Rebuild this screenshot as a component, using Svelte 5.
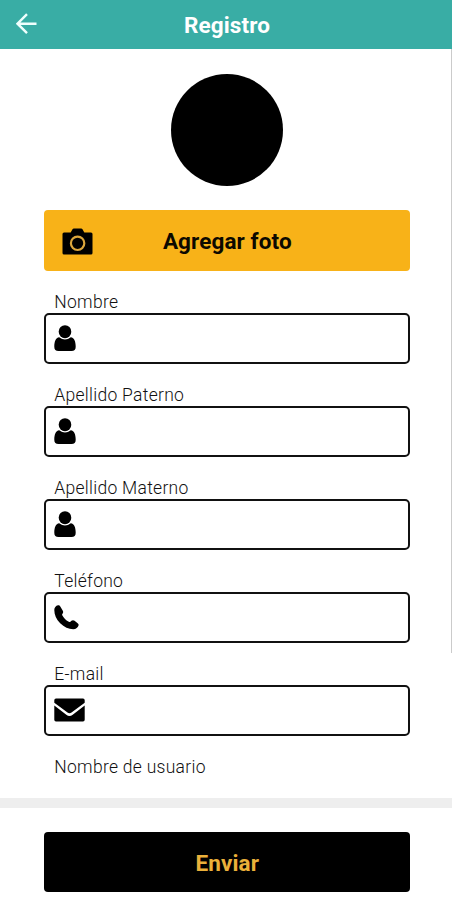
<script>
  const fields = [
    { id: "nombre", label: "Nombre", icon: "user", type: "text" },
    { id: "paterno", label: "Apellido Paterno", icon: "user", type: "text" },
    { id: "materno", label: "Apellido Materno", icon: "user", type: "text" },
    { id: "telefono", label: "Teléfono", icon: "phone", type: "tel" },
    { id: "email", label: "E-mail", icon: "mail", type: "email" },
  ];

  let values = $state({});
</script>

<div class="screen">
  <header>
    <button class="back" aria-label="Volver">
      <svg width="22" height="22" viewBox="0 0 22 22">
        <path d="M11 1.2 1.5 10.7 11 20.2M1.7 10.7H20.5" />
      </svg>
    </button>
    <h1>Registro</h1>
  </header>

  <main>
    <div class="avatar"></div>

    <button class="add-photo">
      <svg class="camera" width="31" height="27" viewBox="0 0 31 27">
        <path
          d="M2 4.5h6.7L10.5 1.2Q11 .5 11.8 .5h7.4q.8 0 1.3.7l1.8 3.3H29q1.5 0 1.5 1.5v19q0 1.5-1.5 1.5H2Q.5 26.5.5 25V6Q.5 4.5 2 4.5Z"
        />
        <circle cx="15.6" cy="15.3" r="6.7" />
      </svg>
      <span>Agregar foto</span>
    </button>

    {#each fields as field (field.id)}
      <div class="field">
        <label for={field.id}>{field.label}</label>
        <div class="box">
          {#if field.icon === "user"}
            <svg width="22" height="26" viewBox="0 0 22 26">
              <ellipse cx="11" cy="6.7" rx="6.3" ry="6.5" />
              <path
                d="M5.2 12.2Q11 16.8 16.8 12.2C20.3 12.7 21.7 16.5 21.7 21.7Q21.7 26 17.5 26H4.5Q.3 26 .3 21.7C.3 16.5 1.7 12.7 5.2 12.2Z"
              />
            </svg>
          {:else if field.icon === "phone"}
            <svg width="25" height="25" viewBox="0 0 25 25">
              <path
                d="M4 .3C1.8.8.3 2.600.3 5c0 4.500 2 9.500 5.900 13.300s8.500 6 13 6c2.800 0 4.900-1.700 5.400-4 .2-.9-.2-1.500-1-2.100l-3-2.400c-1-.8-2.200-.8-3.200 0l-1 .9c-.7.6-1.400.4-2.100-.1-2.200-1.400-4.600-3.900-5.900-6.200-.4-.7-.4-1.200.1-1.700.8-.9.9-1.900.3-3L6.300 1.600C5.700.5 5 .1 4 .3Z"
              />
            </svg>
          {:else}
            <svg width="31" height="24" viewBox="0 0 31 24">
              <path d="M2 .5h27q1.700 0 1.700 1.700v2.600L17.500 14.600q-2 1.500-4 0L.3 4.800V2.200Q.3.500 2 .5Z" />
              <path
                d="M.3 7.500 12.300 16.800q3.200 2.400 6.400 0L30.700 7.500v14.300q0 1.700-1.700 1.700H2Q.3 23.500.3 21.800Z"
              />
            </svg>
          {/if}
          <input id={field.id} type={field.type} bind:value={values[field.id]} />
        </div>
      </div>
    {/each}

    <div class="field">
      <label for="usuario">Nombre de usuario</label>
    </div>

    <div class="scrollbar"></div>
  </main>

  <footer>
    <button class="send">Enviar</button>
  </footer>
</div>

<style>
  :global(body) {
    background: #fff;
    font-family: Roboto, sans-serif;
  }
  .screen {
    display: flex;
    flex-direction: column;
    height: 900px;
    overflow: hidden;
  }
  button {
    border: 0;
    padding: 0;
    font-family: inherit;
    cursor: pointer;
  }
  svg {
    display: block;
    flex: none;
  }
  header {
    flex: none;
    display: grid;
    grid-template-columns: 44px 1fr 44px;
    height: 49px;
    background: #39ada5;
    color: #fff;
  }
  .back {
    display: flex;
    align-items: flex-start;
    padding: 13px 0 0 16px;
    background: none;
  }
  .back path {
    fill: none;
    stroke: #effffd;
    stroke-width: 2.4;
  }
  h1 {
    margin: 0;
    padding-left: 2px;
    text-align: center;
    font-size: 22.5px;
    line-height: 50px;
    font-weight: 700;
    letter-spacing: 0.1px;
  }
  main {
    position: relative;
    flex: none;
    display: flex;
    flex-direction: column;
    box-sizing: border-box;
    height: 749px;
    padding: 25px 41.7px 0 44.3px;
    overflow: hidden;
  }
  .avatar {
    flex: none;
    align-self: center;
    width: 112px;
    height: 112px;
    border-radius: 50%;
    background: #000;
  }
  .add-photo {
    flex: none;
    display: grid;
    grid-template-columns: 49px 1fr 49px;
    align-items: center;
    height: 61px;
    margin: 24px 0 19px;
    border-radius: 4px;
    background: #f8b218;
    color: #0c0900;
    font-size: 22.5px;
    font-weight: 700;
    letter-spacing: 0.1px;
  }
  .add-photo span {
    line-height: 62px;
  }
  .camera {
    margin-left: 17.5px;
  }
  .camera circle {
    fill: none;
    stroke: #dba63c;
    stroke-width: 2.2;
  }
  .field {
    flex: none;
    height: 93px;
  }
  label {
    display: block;
    height: 23px;
    padding-left: 10px;
    color: #111;
    font-size: 17.5px;
    font-weight: 300;
    letter-spacing: 0.28px;
    line-height: 25px;
  }
  .box {
    display: flex;
    align-items: center;
    box-sizing: border-box;
    height: 50.5px;
    padding: 0 8px;
    border: 2px solid #111;
    border-radius: 5px;
  }
  input {
    flex: 1;
    min-width: 0;
    height: 40px;
    border: 0;
    outline: 0;
    background: none;
    font: inherit;
  }
  .scrollbar {
    position: absolute;
    top: 0;
    right: 0;
    width: 1.5px;
    height: 604px;
    background: #cbcbcb;
  }
  footer {
    flex: 1;
    display: flex;
    align-items: flex-start;
    padding: 23.5px 41.7px 0 44.3px;
    border-top: 10px solid #eee;
  }
  .send {
    flex: 1;
    height: 60.5px;
    border-radius: 4px;
    background: #000;
    color: #ebb03a;
    font-size: 22.5px;
    font-weight: 700;
    letter-spacing: 0.1px;
    line-height: 63px;
  }
</style>
